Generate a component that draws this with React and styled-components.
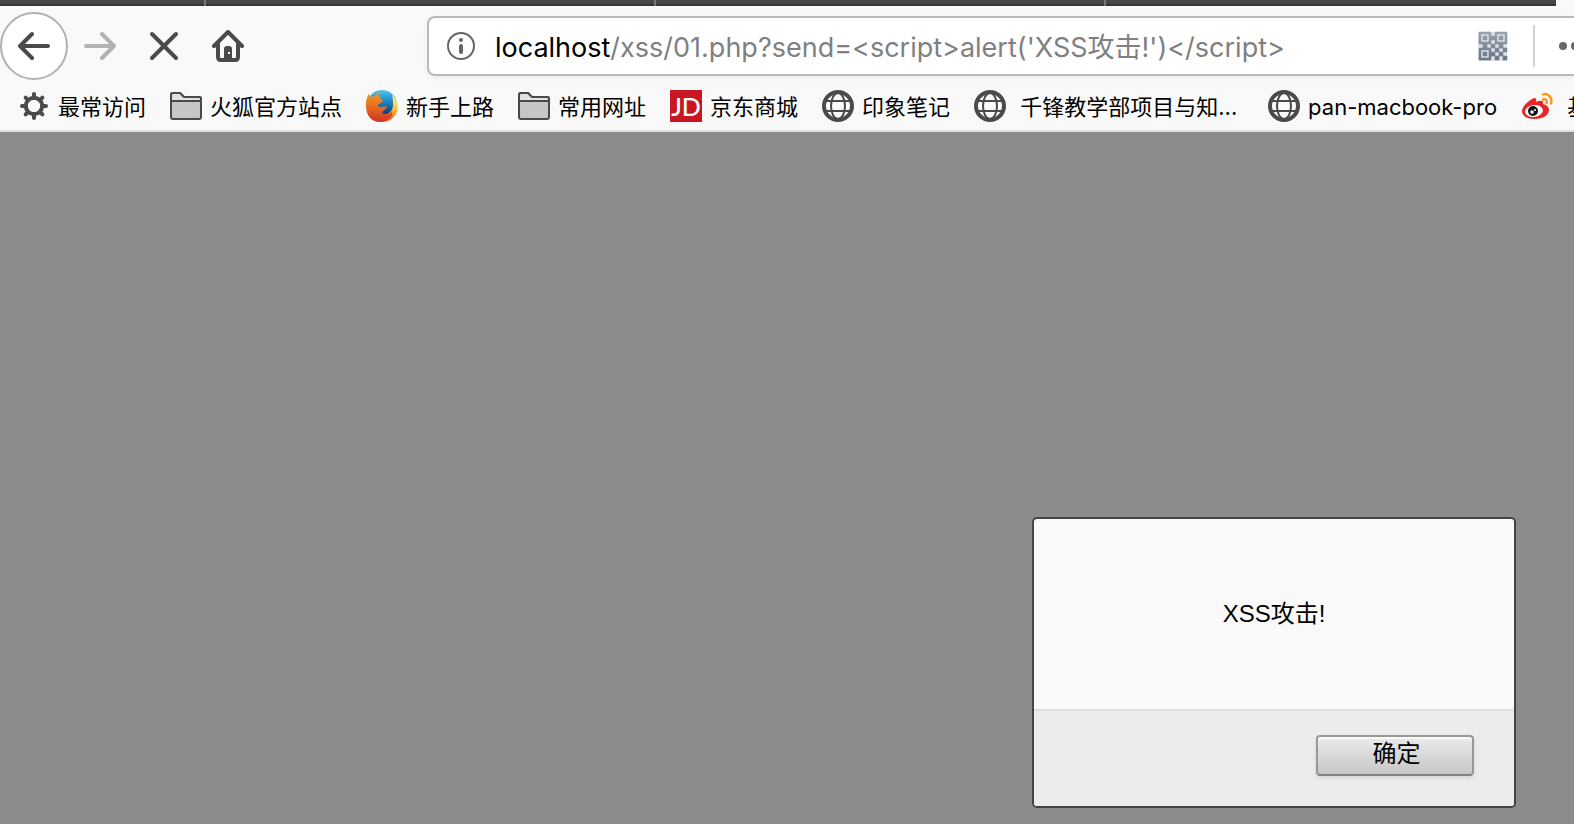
import React from "react";
import styled, { createGlobalStyle } from "styled-components";

const GlobalStyle = createGlobalStyle`
  * { box-sizing: border-box; }
  body { margin: 0; overflow: hidden; }
  button, input { font: inherit; color: inherit; }
  svg { flex: none; }
`;

const uiFont = `Inter, "Noto Sans CJK SC", sans-serif`;

const Browser = styled.div`
  display: flex;
  flex-direction: column;
  min-height: 100vh;
  overflow: hidden;
  background: #f9f9f9;
  font-family: ${uiFont};
  color: #000;
`;

const TabStrip = styled.div`
  display: flex;
  height: 6px;
  margin-right: 18px;
  background: #474747;
  border-bottom: 2px solid #383536;
`;

const Tab = styled.div`
  flex: none;
  width: ${(p) => (p.$first ? 206 : 450)}px;
  border-right: 2px solid #777;
  height: 6px;
`;

const NavBar = styled.nav`
  display: flex;
  align-items: center;
  height: 80px;
`;

const NavButtons = styled.div`
  display: flex;
  flex: none;
  align-items: center;
  width: 427px;
`;

const NavButton = styled.button`
  display: grid;
  place-items: center;
  width: 64px;
  height: 64px;
  padding: 0;
  border: 0;
  background: none;
`;

const BackButton = styled(NavButton)`
  width: 68px;
  height: 68px;
  border: 2px solid #b1b1b1;
  border-radius: 50%;
  background: #fff;
`;

const UrlBar = styled.div`
  display: flex;
  flex: 1;
  align-items: center;
  min-width: 0;
  height: 60px;
  padding-left: 18px;
  border: 2px solid #b9b9b9;
  border-right: 0;
  border-radius: 8px 0 0 8px;
  background: #fff;
  box-shadow: 0 2px 6px rgba(0, 0, 0, 0.05);
  font-size: 27px;
  line-height: 36px;
`;

const Host = styled.label`
  margin-left: 20px;
  padding-top: 3px;
`;

const UrlInput = styled.input`
  flex: 1;
  min-width: 0;
  padding: 3px 0 0;
  border: 0;
  outline: 0;
  background: none;
  color: #808080;
`;

const BarButton = styled.button`
  display: flex;
  flex: none;
  width: ${(p) => p.$width}px;
  padding: 0;
  border: 0;
  background: none;
  overflow: hidden;
`;

const BarDivider = styled.span`
  flex: none;
  width: 2px;
  height: 42px;
  margin: 0 24px 0 25px;
  background: #d2d2d2;
`;

const Bookmarks = styled.nav`
  display: flex;
  gap: 24px;
  height: 46px;
  padding: 4px 0 0 18px;
  border-bottom: 2px solid #e0e0e0;
`;

const Bookmark = styled.a`
  display: flex;
  flex: none;
  gap: 8px;
  height: 32px;
  min-width: ${(p) => (p.$full ? 270 : 0)}px;
  color: inherit;
  font-size: 22px;
  line-height: 34px;
  text-decoration: none;
  white-space: pre;
`;

const Page = styled.main`
  display: flex;
  flex: 1;
  align-items: flex-end;
  justify-content: flex-end;
  padding: 16px 58px 16px 16px;
  background: #8b8b8b;
`;

const Dialog = styled.section`
  width: 484px;
  border: 2px solid #444;
  border-radius: 5px;
  background: #f9f9f9;
  font-family: "Liberation Sans", "Noto Sans CJK SC", sans-serif;
  font-size: 24px;
  line-height: 32px;
  overflow: hidden;
`;

const Message = styled.p`
  margin: 0;
  padding: 79px 24px;
  text-align: center;
`;

const DialogFooter = styled.footer`
  display: flex;
  justify-content: flex-end;
  padding: 24px 40px 30px;
  border-top: 2px solid #dfdfdf;
  background: #ececec;
`;

const OkButton = styled.button`
  width: 158px;
  height: 41px;
  padding: 0 0 3px 3px;
  border: 2px solid #999;
  border-bottom-color: #828282;
  border-radius: 4px;
  background: linear-gradient(#ebebeb, #c6c6c6);
  box-shadow: inset 0 2px #fafafa, 0 2px 4px rgba(0, 0, 0, 0.1);
`;

const stroke = { fill: "none", strokeWidth: 4, strokeLinecap: "round", strokeLinejoin: "round" };

const ArrowIcon = ({ forward }) => (
  <svg width="32" height="32" viewBox="0 0 32 32" stroke={forward ? "#b2b2b2" : "#4a4a4a"} {...stroke}>
    <path d={forward ? "M2 16h28M18 4l12 12-12 12" : "M30 16H2M14 4L2 16l12 12"} />
  </svg>
);

const StopIcon = () => (
  <svg width="32" height="32" viewBox="0 0 32 32" stroke="#4a4a4a" {...stroke}>
    <path d="M4 4l24 24M28 4L4 28" />
  </svg>
);

const HomeIcon = () => (
  <svg width="32" height="32" viewBox="0 0 32 32" stroke="#4a4a4a" {...stroke}>
    <path d="M2 16L16 2l14 14M6 14v13q0 3 3 3h14q3 0 3-3V14" />
    <path d="M12 29V19q0-3 3-3h2q3 0 3 3v10z" fill="#4a4a4a" stroke="none" />
    <rect x="16" y="22" width="2" height="2" fill="#f9f9f9" stroke="none" />
  </svg>
);

const InfoIcon = () => (
  <svg width="28" height="28" viewBox="0 0 28 28">
    <circle cx="14" cy="14" r="13" fill="none" stroke="#666" strokeWidth="2" />
    <circle cx="14" cy="8" r="2" fill="#666" />
    <rect x="12" y="12" width="4" height="10" rx="2" fill="#666" />
  </svg>
);

const qrFinder = (x, y) => `M${x} ${y}h12v12h-12zM${x + 2} ${y + 2}v8h8v-8zM${x + 4} ${y + 4}h4v4h-4z`;

const QrIcon = () => (
  <svg width="32" height="32" viewBox="0 0 32 32">
    <defs>
      <linearGradient id="qr" x1="0" y1="0" x2="0" y2="1">
        <stop offset="0" stopColor="#98a3b0" />
        <stop offset="1" stopColor="#6b7785" />
      </linearGradient>
    </defs>
    <rect x="2" y="2" width="29" height="29" fill="#dfe3e7" />
    <path
      fill="url(#qr)"
      stroke="url(#qr)"
      strokeWidth="0.6"
      fillRule="evenodd"
      d={
        qrFinder(3, 2) + qrFinder(19, 2) + qrFinder(3, 18) +
        "M15 6h4v4h-4zM7 14h4v4h-4zM15 14h4v4h-4zM23 14h4v4h-4zM19 18h4v4h-4zM27 18h4v4h-4zM15 22h4v4h-4zM23 22h4v4h-4zM19 26h4v4h-4zM27 26h4v4h-4z"
      }
    />
  </svg>
);

const MoreIcon = () => (
  <svg width="32" height="8" viewBox="0 0 32 8" fill="#666">
    <circle cx="4" cy="4" r="4" />
    <circle cx="16" cy="4" r="4" />
    <circle cx="28" cy="4" r="4" />
  </svg>
);

const GearIcon = () => (
  <svg width="32" height="32" viewBox="0 0 32 32" stroke="#4a4a4a" {...stroke}>
    <circle cx="16" cy="16" r="8.2" />
    <path d="M16 4v4M16 24v4M4 16h4M24 16h4M7.6 7.6l2 2M22.4 22.4l2 2M24.4 7.6l-2 2M9.6 22.4l-2 2" />
  </svg>
);

const FolderIcon = () => (
  <svg width="32" height="32" viewBox="0 0 32 32" stroke="#4a4a4a" strokeWidth="2" strokeLinejoin="round">
    <path d="M1 27V5q0-2 2-2h7l4 4h15q2 0 2 2v18q0 2-2 2H3q-2 0-2-2z" fill="#c6c6c6" />
    <path d="M1 11V5q0-2 2-2h7l4 4h15q2 0 2 2v2z" fill="#e2e2e2" />
  </svg>
);

const FirefoxIcon = () => (
  <svg width="32" height="32" viewBox="0 0 32 32">
    <defs>
      <linearGradient id="ffBlue" x1="0" y1="0" x2="0" y2="1">
        <stop offset="0" stopColor="#52c8f2" />
        <stop offset="0.4" stopColor="#1c84c0" />
        <stop offset="0.8" stopColor="#173a70" />
      </linearGradient>
      <linearGradient id="ffFox" x1="0" y1="0" x2="0" y2="1">
        <stop offset="0" stopColor="#f39c2c" />
        <stop offset="0.5" stopColor="#ea6a1f" />
        <stop offset="1" stopColor="#cf3326" />
      </linearGradient>
      <linearGradient id="ffTail" x1="0" y1="0" x2="0" y2="1">
        <stop offset="0" stopColor="#fff3a0" />
        <stop offset="0.5" stopColor="#fbc53a" />
        <stop offset="1" stopColor="#e2551f" />
      </linearGradient>
    </defs>
    <circle cx="16" cy="15" r="15" fill="url(#ffBlue)" />
    <path d="M26 5c6 5 7 13 4 19-3 5-8 8-14 8l-2-7c8 1 13-4 13-10 0-4 0-7-1-10z" fill="url(#ffTail)" />
    <path d="M1 8l2-5c0 2 1 3 2 4 2-1 4-1 5-1 0-2 1-3 3-4-1 2 0 4 1 6l3 3c0 2-4 2-5 4 0 2 1 2 3 2 2 0 4-1 6 0-1 3-4 3-5 6 4 2 8 1 10-2 1 4-1 7-5 9-8 5-21 1-21-14 0-3 0-6 1-8z" fill="url(#ffFox)" />
  </svg>
);

const JdIcon = () => (
  <svg width="32" height="32" viewBox="0 0 32 32">
    <rect width="32" height="32" fill="#c91623" />
    <text x="16" y="26" textAnchor="middle" fill="#fff" fontFamily="Lato, sans-serif" fontSize="25" fontWeight="500">JD</text>
  </svg>
);

const GlobeIcon = () => (
  <svg width="32" height="32" viewBox="0 0 32 32" fill="none" stroke="#4a4a4a" strokeWidth="2">
    <circle cx="16" cy="16" r="14" strokeWidth="4" />
    <ellipse cx="16" cy="16" rx="7" ry="13" />
    <path d="M4 11h24M4 21h24" />
  </svg>
);

const WeiboIcon = () => (
  <svg width="32" height="32" viewBox="0 0 32 32">
    <path d="M11 9c3-2 5-1 4 3 4-2 8-2 7 2 4 1 6 3 6 6 0 5-6 9-14 9C6 29 1 26 1 21c0-4 5-9 10-12z" fill="#e6262b" />
    <ellipse cx="13" cy="21" rx="9" ry="6" fill="#fff" transform="rotate(-8 13 21)" />
    <circle cx="12" cy="21" r="5" fill="#111" />
    <circle cx="11" cy="22" r="1.8" fill="#fff" />
    <circle cx="14" cy="20" r="1" fill="#fff" />
    <path d="M22 4.500c5-2 10 4 8 9M22 9.500c3-1 4.500 1 3.500 3.500" fill="none" stroke="#f7981d" strokeWidth="2.400" strokeLinecap="round" />
  </svg>
);

const bookmarks = [
  { label: "最常访问", Icon: GearIcon },
  { label: "火狐官方站点", Icon: FolderIcon },
  { label: "新手上路", Icon: FirefoxIcon },
  { label: "常用网址", Icon: FolderIcon },
  { label: "京东商城", Icon: JdIcon },
  { label: "印象笔记", Icon: GlobeIcon },
  { label: " 千锋教学部项目与知...", Icon: GlobeIcon, full: true },
  { label: "pan-macbook-pro", Icon: GlobeIcon },
  { label: " 基", Icon: WeiboIcon },
];

export default function App() {
  return (
    <Browser>
      <GlobalStyle />
      <TabStrip>
        <Tab $first />
        <Tab />
        <Tab />
      </TabStrip>
      <NavBar>
        <NavButtons>
          <BackButton aria-label="后退"><ArrowIcon /></BackButton>
          <NavButton aria-label="前进" disabled><ArrowIcon forward /></NavButton>
          <NavButton aria-label="停止"><StopIcon /></NavButton>
          <NavButton aria-label="主页"><HomeIcon /></NavButton>
        </NavButtons>
        <UrlBar>
          <InfoIcon />
          <Host htmlFor="url">localhost</Host>
          <UrlInput id="url" type="text" spellCheck={false} defaultValue="/xss/01.php?send=<script>alert('XSS攻击!')</script>" />
          <BarButton $width={32} aria-label="二维码"><QrIcon /></BarButton>
          <BarDivider />
          <BarButton $width={15} aria-label="更多"><MoreIcon /></BarButton>
        </UrlBar>
      </NavBar>
      <Bookmarks>
        {bookmarks.map(({ label, Icon, full }) => (
          <Bookmark key={label} href="#" $full={full}>
            <Icon />
            {label}
          </Bookmark>
        ))}
      </Bookmarks>
      <Page>
        <Dialog role="alertdialog" aria-describedby="alert-message">
          <Message id="alert-message">XSS攻击!</Message>
          <DialogFooter>
            <OkButton>确定</OkButton>
          </DialogFooter>
        </Dialog>
      </Page>
    </Browser>
  );
}
